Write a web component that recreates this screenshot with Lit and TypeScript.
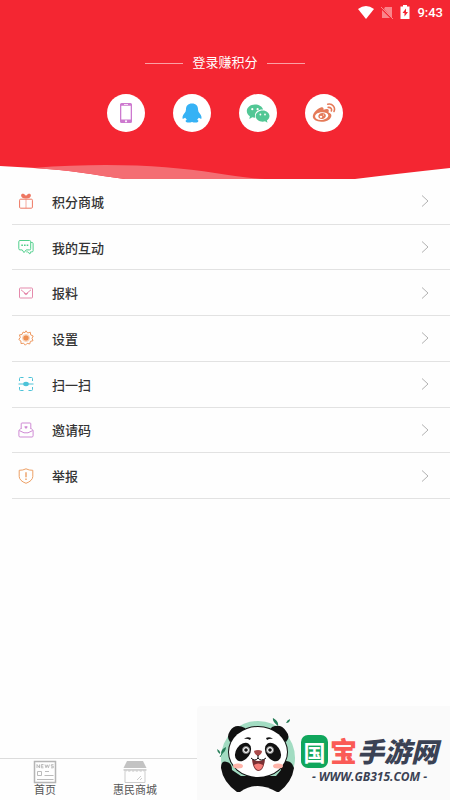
import { LitElement, html, css, svg } from "lit";
import { customElement } from "lit/decorators.js";

const menu = [
  { label: "积分商城", icon: svg`<g stroke="#ee7762"><rect x="1.600" y="6.200" width="12.800" height="9" rx="1"/><path d="M8 6.200v9" stroke-opacity=".6"/><path fill="#ee7762" stroke="none" d="M8 5.600C5 5.700 3.200 4.800 3.100 2.600 3 .8 4.700 .3 6 1.100L8 2.800 10 1.100C11.300 .3 13 .8 12.900 2.600 12.800 4.800 11 5.700 8 5.600z"/></g>` },
  { label: "我的互动", icon: svg`<g stroke="#50cf8c"><path d="M2 1.500h9.500q1.200 0 1.200 1.200v7q0 1.200-1.200 1.200H8.200L6 13.600 4.200 10.900H2Q.8 10.900.8 9.700v-7Q.8 1.500 2 1.500z"/><path d="M13 3.500h.9q1.200 0 1.200 1v7.200q0 1.200-1.200 1.200h-1.400l-.6 2.100-2.200-2.100H8.300"/><path d="M3.300 6.200h1.600M6 6.200h1.600M8.700 6.200h1.600" stroke-width="1.500"/></g>` },
  { label: "报料", icon: svg`<g stroke="#e58aac"><rect x="1.500" y="3" width="13" height="10" rx=".8"/><path d="M3 4.800L8 9l5-4.200"/><path d="M6.300 8L8 9.400 9.700 8" stroke-width="1.500"/></g>` },
  { label: "设置", icon: svg`<g stroke="#ee985f"><path stroke-linejoin="round" d="M8 .8L9.700 3 12.300 2.200 12.700 4.900 15.200 6 14 8.300 15 10.700 12.400 11.400 11.700 14 9.200 13.300 7.300 15.200 5.600 13.200 3 13.600 2.900 11 .8 9.500 2.300 7.400 1.400 4.900 4 4.500 5 2.100 7 2.600z"/><circle cx="8" cy="8" r="3.600" stroke-opacity=".4"/><circle cx="8" cy="8" r="2.800" fill="#ee8f50" stroke="none"/></g>` },
  { label: "扫一扫", icon: svg`<g stroke="#4dc3d8"><path d="M1.500 5V2.500q0-1 1-1H5.500M10.500 1.500h3q1 0 1 1V5M14.500 11v2.500q0 1-1 1h-3M5.500 14.500h-3q-1 0-1-1V11M.5 8h15"/><ellipse cx="8" cy="8" rx="2.800" ry="2.200" fill="#4dc3d8" stroke="none"/></g>` },
  { label: "邀请码", icon: svg`<g stroke="#cf8ad4"><path d="M3.200 7V1.800q0-.8.800-.8h8q.8 0 .8.800V7"/><path d="M3 6.300L1.500 7.800q-.6.400-.6 1v5q0 1.200 1.200 1.200h11.800q1.200 0 1.200-1.200v-5q0-.6-.6-1L13 6.300M1.200 8.500L6 10.800h4l4.800-2.300"/><path fill="#cf8ad4" stroke="none" d="M8 7L6.500 5.300q-.3-1 .6-1.200L8 4.600l.9-.5q.9.200.6 1.200z"/></g>` },
  { label: "举报", icon: svg`<g stroke="#eda066"><path stroke-linejoin="round" d="M8 .8Q11 2.400 14.800 2.300V8.500Q14.600 12.800 8 15.300 1.400 12.800 1.200 8.500V2.300Q5 2.400 8 .8z"/><path d="M8 4.300v4.900M8 10.500v1.400" stroke-width="1.400"/></g>` },
];

const logins = [
  { name: "手机登录", icon: svg`<path fill="#cd79cf" fill-rule="evenodd" d="M7.500 2h9Q18 2 18 3.500v17Q18 22 16.500 22h-9Q6 22 6 20.500v-17Q6 2 7.500 2zM7.300 4.700v13.800h9.400V4.700zM10 3.100v.6h4v-.6zM12 19.300a1 1 0 1 0 .01 0z"/>` },
  { name: "QQ登录", icon: svg`<path fill="#36b2f5" d="M12 2.500C8 2.500 5.800 5 6 8.600L5.500 10.800 3.200 14Q1.800 16.500 2.700 18L5.200 16.800 6.800 18.800Q4.600 19.800 6 20.900 8.700 22 12 20.900 15.300 22 18 20.900 19.400 19.800 17.200 18.800L18.800 16.800 21.300 18Q22.200 16.500 20.800 14L18.500 10.800 18 8.600C18.200 5 16 2.500 12 2.500z"/>` },
  { name: "微信登录", icon: svg`<path fill="#52c795" d="M9 3.500C4.400 3.500.8 6.400.8 10.100c0 2.200 1.200 4 3.100 5.200L3.300 18l3-1.700c1 .3 2 .4 3 .3C7.700 11.500 12 8.200 17.200 8.600 16.200 5.500 13 3.500 9 3.500z"/><path fill="#52c795" d="M16.700 9.500c-3.900 0-7 2.500-7 5.600s3.100 5.600 7 5.600q1.200 0 2.300-.4l2.500 1.400-.6-2.200c1.600-1 2.600-2.600 2.600-4.400 0-3.100-3-5.600-6.800-5.600z"/><g fill="#fff"><circle cx="6.300" cy="8.200" r="1.100"/><circle cx="11.600" cy="8.200" r="1.100"/><circle cx="14.400" cy="13.500" r=".9"/><circle cx="19" cy="13.500" r=".9"/></g>` },
  { name: "微博登录", icon: svg`<path fill="#e57a58" fill-rule="evenodd" d="M9.500 6.200Q12 5.800 11.500 8.800 16.200 7 16.800 9.200L16.500 11.400Q20.200 12.500 19.200 15.700C18 19 13.700 21 9.300 20.800 4.500 20.600.7 18.500.8 15.300.9 11.700 6 6.800 9.500 6.200zM10 11.200c-4 .1-7 2-6.900 4.400.1 2.300 3.200 3.700 6.900 3.300 3.700-.3 6.500-2.400 6.300-4.600-.2-2.100-3-3.200-6.300-3.100z"/><path fill="#e57a58" fill-rule="evenodd" d="M10.500 12c-2.500 0-4.400 1.700-4.200 3.600.2 1.800 2 2.800 4.200 2.400 2.200-.4 3.700-2.200 3.300-3.800-.3-1.400-1.600-2.200-3.300-2.200zM9 14.700a1.300 1.100 0 1 1-.01 2.200 1.300 1.100 0 1 1 .01-2.200zM11.500 13.400a.7.600 0 1 1 0 1.200.7.600 0 1 1 0-1.200z"/><path fill="none" stroke="#e57a58" stroke-width="1.600" stroke-linecap="round" d="M15.700 3.200C20.500 2.200 23.800 6.300 22 10.500M16.200 6.400C18.600 6 20.200 8 19.300 10"/>` },
];

const tabs = [
  { label: "首页", icon: svg`<rect x="1.500" y="1.500" width="21" height="21" fill="none" stroke="#b5b5b5" stroke-width="1.500"/><path fill="none" stroke="#bbb" d="M4 8V4.500L6.500 8V4.500M10.500 4.500H8.300v3.300h2.200M8.300 6.200h2M12 4.500l1 3.300 1.200-3 1.200 3 1-3.300M20.500 4.700h-2.200v1.500h2v1.600H18M4.500 11.500h4v4h-4zM12 11.500h4M11.500 15.500h9M4 19.500h16.500"/>` },
  { label: "惠民商城", icon: svg`<path fill="#c3c3c3" d="M4 1h16l3.500 7H.5z"/><path fill="#d2d2d2" d="M.5 9h23v1.500q-1.900 2.500-3.800 0-1.900 2.500-3.900 0-1.900 2.500-3.800 0-1.900 2.500-3.800 0-2 2.500-3.900 0-1.900 2.500-3.800 0z"/><path fill="none" stroke="#ccc" d="M2 12v10.500h20V12M14 20l4-4M17 20l2-2"/>` },
];

@customElement("app-root")
export class AppRoot extends LitElement {
  static styles = css`
    :host {
      display: flex;
      flex-direction: column;
      position: relative;
      min-height: 100vh;
      background: #fefefe;
      color: #333;
      font-family: Roboto, "Noto Sans CJK SC", sans-serif;
    }
    svg { display: block; flex: none; }
    a { color: inherit; text-decoration: none; }
    .hero { background: #f42632; color: #fff; }
    .status {
      display: flex;
      align-items: center;
      justify-content: flex-end;
      gap: 7px;
      height: 24px;
      padding-right: 7px;
      font-size: 13px;
      font-weight: 500;
    }
    .title {
      display: flex;
      align-items: center;
      justify-content: center;
      gap: 9px;
      margin: 29px 0 0;
      font-size: 13px;
      font-weight: 400;
      line-height: 20px;
    }
    .title::before, .title::after {
      content: "";
      width: 38px;
      height: 1px;
      background: #fba0a5;
    }
    .logins {
      display: flex;
      justify-content: center;
      gap: 28px;
      padding: 21px 0 33px;
    }
    .login {
      display: grid;
      place-items: center;
      width: 38px;
      height: 38px;
      padding: 0;
      border: 0;
      border-radius: 50%;
      background: #fff;
      cursor: pointer;
    }
    .wave { width: 100%; height: 14px; }
    .menu {
      display: grid;
      grid-auto-rows: 1fr;
      min-height: 320px;
      margin: 0;
      padding: 0 0 0 12px;
      list-style: none;
    }
    .item { display: grid; border-bottom: 1px solid #e2e2e2; }
    .row {
      display: flex;
      align-items: center;
      padding: 0 20px 0 6px;
      font-size: 13px;
      font-weight: 500;
    }
    .label { flex: 1; margin-left: 18px; }
    .tabs {
      display: grid;
      grid-template-columns: repeat(5, 1fr);
      height: 41px;
      margin-top: auto;
      border-top: 1px solid #dcdcdc;
    }
    .tab {
      display: flex;
      flex-direction: column;
      align-items: center;
      padding-top: 1px;
      font-size: 11px;
      line-height: 14px;
      color: #555;
    }
    .brand {
      position: absolute;
      right: 0;
      bottom: 0;
      display: flex;
      align-items: center;
      box-sizing: border-box;
      width: 253px;
      height: 94px;
      padding-left: 20px;
      border-top-left-radius: 4px;
      background: #fafafa;
      color: #3b4254;
    }
    .panda { margin-top: 8px; }
    .words {
      display: flex;
      flex-direction: column;
      align-items: center;
      margin-left: 4px;
      padding-top: 12px;
    }
    .name {
      display: flex;
      align-items: center;
      height: 36px;
      font-family: "Noto Sans CJK SC", sans-serif;
      font-size: 27px;
      font-weight: 900;
      line-height: 34px;
    }
    .tile {
      width: 27px;
      margin-right: 2px;
      border-radius: 7px;
      background: #10a65c;
      color: #fff;
      font-size: 22px;
      font-weight: 700;
      line-height: 33px;
      text-align: center;
    }
    .red { color: #fa5b56; }
    .slant { font-style: italic; }
    .site {
      font-family: "Open Sans", sans-serif;
      font-size: 12px;
      font-weight: 700;
      font-style: italic;
      line-height: 16px;
      white-space: nowrap;
    }
  `;

  render() {
    return html`
      <header class="hero">
        <div class="status">
          <svg width="16" height="13" viewBox="0 0 16 13"><path fill="#fff" d="M0 3Q8-3 16 3L8 13z"/></svg>
          <svg width="12" height="13" viewBox="0 0 12 13"><path fill="#fa858b" d="M4 1h7v11L3 3zM1 4l8 8H1z"/><path stroke="#fa858b" d="M0 1l12 12"/></svg>
          <svg width="10" height="14" viewBox="1 0 10 14"><path fill="#fff" d="M4 0h4v1.500h2.500V14h-9V1.500H4z"/><path fill="#f42632" d="M7 3.500L3.500 8h2v3.500L9 7H7z"/></svg>
          <span>9:43</span>
        </div>
        <h1 class="title">登录赚积分</h1>
        <div class="logins">
          ${logins.map((l) => html`<button class="login" aria-label=${l.name}><svg width="24" height="24" viewBox="0 0 24 24">${l.icon}</svg></button>`)}
        </div>
        <svg class="wave" viewBox="0 0 450 14" preserveAspectRatio="none">
          <path fill="#fefefe" d="M0 1L35 3C70 5 95 10 125 14H0zM355 14Q395 9 450 3V14z"/>
          <path fill="#f46d73" d="M33 3C110-3 170 1 215 8Q245 13 265 14H125C95 10 70 5 33 3z"/>
        </svg>
      </header>
      <ul class="menu">
        ${menu.map((m) => html`<li class="item"><a class="row" href="#">
          <svg width="16" height="16" viewBox="0 0 16 16" fill="none">${m.icon}</svg>
          <span class="label">${m.label}</span>
          <svg width="10" height="14" viewBox="0 0 10 14"><path fill="none" stroke="#b2b2b2" d="M2 1.500L8 7l-6 5.500"/></svg>
        </a></li>`)}
      </ul>
      <nav class="tabs">
        ${tabs.map((t) => html`<a class="tab" href="#"><svg width="24" height="24" viewBox="0 0 24 24">${t.icon}</svg>${t.label}</a>`)}
      </nav>
      <aside class="brand">
        <svg class="panda" width="80" height="78" viewBox="0 0 80 78">
          <circle cx="41" cy="40" r="37" fill="#a2dcc2"/>
          <g fill="#111">
            <path d="M13 24Q9 19 13 13 18 5 28 10L30 14zM69 24Q74 19 69 13 64 5 55 9L52 13z"/>
            <path d="M4 50Q4 42 10 44 15 45 15 52L24 58H59L64 52Q61 44 67 43 75 42 77 50 75 64 62 74H20Q6 64 4 50z"/>
            <ellipse cx="41" cy="34" rx="30" ry="26"/>
          </g>
          <ellipse cx="41" cy="34" rx="29" ry="25" fill="#fff"/>
          <path fill="#fafafa" d="M20 78L23 74Q40 62 60 74L62 78z"/>
          <g fill="#111">
            <ellipse cx="26" cy="34" rx="7" ry="10" transform="rotate(35 26 34)"/>
            <ellipse cx="56" cy="34" rx="7" ry="10" transform="rotate(-35 56 34)"/>
            <path d="M27 21Q30 18 34 20L33 22Q30 20 27 21zM49 20Q53 18 56 21 53 20 50 22z"/>
          </g>
          <g fill="#fff" stroke="#777"><circle cx="29" cy="32" r="3.500"/><circle cx="53" cy="32" r="3.500"/></g>
          <g fill="#111"><circle cx="29" cy="32" r="1.800"/><circle cx="53" cy="32" r="1.800"/></g>
          <ellipse cx="21" cy="48" rx="5" ry="2.500" fill="#ffb4a9"/><ellipse cx="61" cy="48" rx="5" ry="2.500" fill="#ffb4a9"/>
          <path fill="#7b3033" d="M35 41Q41 45 48 41 47 53 41 53 36 52 35 41z"/>
          <path fill="#f57e79" d="M37 47Q41 44 46 47 45 52 41 52 38 51 37 47z"/>
          <path fill="#a94b4b" d="M37 33Q41 31 45 33 45 36 41 38 37 36 37 33z"/>
          <path fill="none" stroke="#111" d="M41 37v3M34 40Q38 44 41 40 44 44 49 40"/>
          <path fill="#267d58" d="M4 36Q4 31 9 29 9 34 4 36zM3 36Q0 34 0 31 4 33 3 36zM61 8Q55 3 56 0 62 3 61 8zM69 5Q73 5 73 1 70 2 69 5z"/>
          <path stroke="#267d58" d="M3 39L6 34"/>
        </svg>
        <div class="words">
          <div class="name"><span class="tile">国</span><span class="red">宝</span><span class="slant">手游网</span></div>
          <span class="site">- WWW.GB315.COM -</span>
        </div>
      </aside>
    `;
  }
}
